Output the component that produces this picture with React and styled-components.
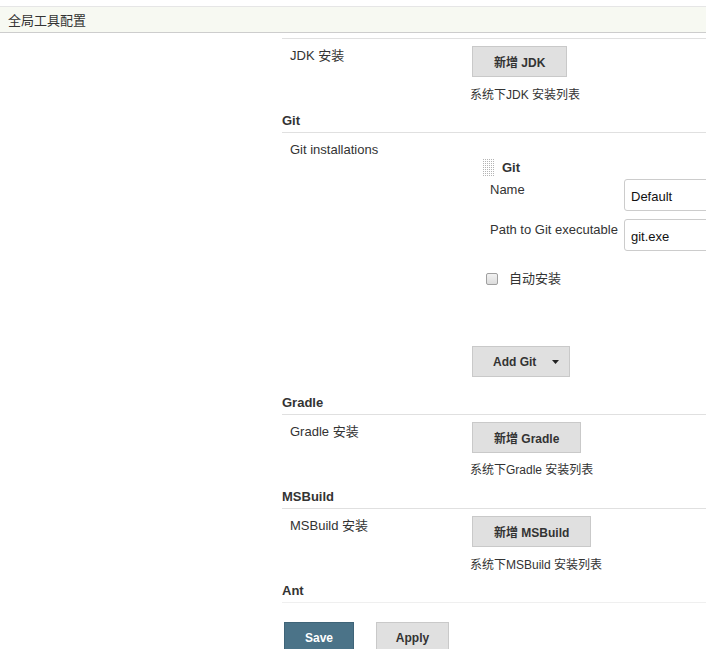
import React from "react";
import styled, { createGlobalStyle } from "styled-components";

const GlobalStyle = createGlobalStyle`
  html, body {
    margin: 0;
    padding: 0;
    background: #fff;
    overflow: hidden;
  }
  body {
    font-family: "Liberation Sans", Arial, "Noto Sans CJK SC", sans-serif;
    font-size: 13px;
    color: #333;
  }
`;

const Page = styled.div`
  width: 706px;
  height: 649px;
  overflow: hidden;
  padding-top: 6px;
  box-sizing: border-box;
`;

const Breadcrumb = styled.div`
  height: 25px;
  border-top: 1px solid #e6e6e6;
  border-bottom: 1px solid #cdcdcd;
  background: #f7f9f2;
  display: flex;
  align-items: center;
  padding-left: 8px;
  font-size: 13px;
  color: #333;
`;

const Main = styled.div`
  margin-left: 282px;
  margin-top: 5px;
`;

const Divider = styled.div`
  border-top: 1px solid ${(p) => (p.faint ? "#efefef" : "#e0e0e0")};
`;

const SectionHeader = styled.div`
  font-weight: bold;
  font-size: 13px;
  line-height: 16px;
  color: #333;
  padding-top: ${(p) => p.top || 10}px;
  padding-bottom: 3px;
`;

const Row = styled.div`
  display: grid;
  grid-template-columns: 188px 1fr;
  align-items: start;
`;

const Label = styled.div`
  padding: 9px 0 0 8px;
  line-height: 16px;
`;

const Value = styled.div`
  display: flex;
  flex-direction: column;
  align-items: flex-start;
`;

const Button = styled.button`
  height: 31px;
  margin-top: ${(p) => p.top || 7}px;
  margin-left: 2px;
  padding: 0 ${(p) => p.right || 21}px 0 ${(p) => p.left || 21}px;
  background: #e0e0e0;
  border: 1px solid #c9c9c9;
  border-radius: 0;
  font-family: "Liberation Sans", Arial, "Noto Sans CJK SC", sans-serif;
  font-weight: bold;
  font-size: 12px;
  color: #333;
  display: flex;
  align-items: center;
  gap: ${(p) => p.gap || 0}px;
  cursor: pointer;
`;

const Description = styled.div`
  font-size: 12px;
  line-height: 16px;
  margin-top: ${(p) => p.top || 11}px;
`;

const GitBlock = styled.div`
  margin-top: 25px;
  margin-left: 13px;
  width: 260px;
`;

const BlockTitle = styled.div`
  display: flex;
  align-items: center;
  gap: 8px;
  height: 17px;
  padding-top: 1px;
  font-weight: bold;
  font-size: 13px;
`;

const FieldRow = styled.div`
  display: grid;
  grid-template-columns: 134px 1fr;
  margin-top: ${(p) => p.top}px;
  padding-left: 7px;
`;

const FieldLabel = styled.div`
  padding-top: 3px;
  line-height: 16px;
  white-space: nowrap;
`;

const TextInput = styled.input`
  width: 300px;
  height: 32px;
  box-sizing: border-box;
  border: 1px solid #ccc;
  border-radius: 3px;
  padding: 2px 6px 0;
  font-family: "Liberation Sans", Arial, sans-serif;
  font-size: 13px;
  color: #111;
  outline: none;
`;

const CheckRow = styled.label`
  display: flex;
  align-items: center;
  gap: 11px;
  margin-top: 20px;
  margin-left: 3px;
  line-height: 16px;
`;

const Checkbox = styled.input.attrs({ type: "checkbox" })`
  appearance: none;
  margin: 0;
  width: 12px;
  height: 12px;
  border: 1px solid #a0a0a0;
  border-radius: 2px;
  background: linear-gradient(#f2f2f2, #dcdcdc);
`;

const Footer = styled.div`
  display: flex;
  gap: 22px;
  margin-top: 19px;
  margin-left: 2px;
`;

const FooterButton = styled.button`
  height: 32px;
  width: ${(p) => p.w}px;
  background: ${(p) => (p.primary ? "#4b7388" : "#e0e0e0")};
  border: 1px solid ${(p) => (p.primary ? "#3f6478" : "#c9c9c9")};
  color: ${(p) => (p.primary ? "#fff" : "#333")};
  font-family: "Liberation Sans", Arial, sans-serif;
  font-weight: bold;
  font-size: 12px;
  padding: 0;
`;

const DragHandle = () => (
  <svg width="11" height="17" viewBox="0 0 11 17">
    {Array.from({ length: 9 }).map((_, r) =>
      Array.from({ length: 6 }).map((_, c) => (
        <rect key={`${r}-${c}`} x={c * 2} y={r * 2} width="1" height="1" fill="#b4b4b4" />
      ))
    )}
  </svg>
);

const Caret = () => (
  <svg width="7" height="4" viewBox="0 0 7 4">
    <path d="M0 0h7L3.5 4z" fill="#222" />
  </svg>
);

const Install = ({ label, button, desc, descTop }) => (
  <Row>
    <Label>{label}</Label>
    <Value>
      <Button>{button}</Button>
      <Description top={descTop}>{desc}</Description>
    </Value>
  </Row>
);

const App = () => (
  <Page>
    <GlobalStyle />
    <Breadcrumb>全局工具配置</Breadcrumb>
    <Main>
      <Divider />
      <Install label="JDK 安装" button="新增 JDK" desc="系统下JDK 安装列表" descTop={10} />

      <SectionHeader>Git</SectionHeader>
      <Divider />
      <Row>
        <Label>Git installations</Label>
        <Value>
          <GitBlock>
            <BlockTitle>
              <DragHandle />
              Git
            </BlockTitle>
            <FieldRow top={3}>
              <FieldLabel>Name</FieldLabel>
              <TextInput defaultValue="Default" />
            </FieldRow>
            <FieldRow top={8}>
              <FieldLabel>Path to Git executable</FieldLabel>
              <TextInput defaultValue="git.exe" />
            </FieldRow>
            <CheckRow>
              <Checkbox />
              自动安装
            </CheckRow>
          </GitBlock>
          <Button top={59} left={20} right={10} gap={16}>
            Add Git <Caret />
          </Button>
        </Value>
      </Row>

      <SectionHeader top={18}>Gradle</SectionHeader>
      <Divider />
      <Install label="Gradle 安装" button="新增 Gradle" desc="系统下Gradle 安装列表" descTop={9} />

      <SectionHeader top={11}>MSBuild</SectionHeader>
      <Divider />
      <Install label="MSBuild 安装" button="新增 MSBuild" desc="系统下MSBuild 安装列表" descTop={10} />

      <SectionHeader top={10}>Ant</SectionHeader>
      <Divider faint />
      <Footer>
        <FooterButton primary w={70}>Save</FooterButton>
        <FooterButton w={73}>Apply</FooterButton>
      </Footer>
    </Main>
  </Page>
);

export default App;
